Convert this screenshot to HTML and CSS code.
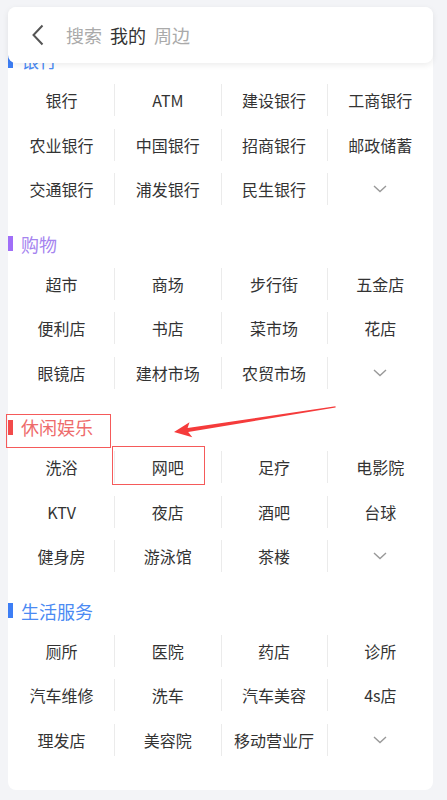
FILE: index.html
```html
<!DOCTYPE html>
<html>
<head>
  <meta charset="utf-8">
  <link rel="stylesheet" href="styles.css">
  <title>我的周边</title>
</head>
<body>
  <div class="search-bar">
    <svg class="back" width="14" height="22" viewBox="0 0 14 22"><polyline points="11.5,1.5 2.5,11 11.5,20.5" fill="none" stroke="#555" stroke-width="2"/></svg>
    <span class="tab">搜索</span>
    <span class="tab active">我的</span>
    <span class="tab">周边</span>
  </div>

  <div class="card">
    <div class="section">
      <div class="section-title blue">银行</div>
      <div class="grid">
        <div class="cell">银行</div>
        <div class="cell">ATM</div>
        <div class="cell">建设银行</div>
        <div class="cell">工商银行</div>
        <div class="cell">农业银行</div>
        <div class="cell">中国银行</div>
        <div class="cell">招商银行</div>
        <div class="cell">邮政储蓄</div>
        <div class="cell">交通银行</div>
        <div class="cell">浦发银行</div>
        <div class="cell">民生银行</div>
        <div class="cell"><svg class="more" width="14" height="8" viewBox="0 0 14 8"><polyline points="1,1 7,6.5 13,1" fill="none" stroke="#999" stroke-width="1.4"/></svg></div>
      </div>
    </div>

    <div class="section">
      <div class="section-title purple">购物</div>
      <div class="grid">
        <div class="cell">超市</div>
        <div class="cell">商场</div>
        <div class="cell">步行街</div>
        <div class="cell">五金店</div>
        <div class="cell">便利店</div>
        <div class="cell">书店</div>
        <div class="cell">菜市场</div>
        <div class="cell">花店</div>
        <div class="cell">眼镜店</div>
        <div class="cell">建材市场</div>
        <div class="cell">农贸市场</div>
        <div class="cell"><svg class="more" width="14" height="8" viewBox="0 0 14 8"><polyline points="1,1 7,6.5 13,1" fill="none" stroke="#999" stroke-width="1.4"/></svg></div>
      </div>
    </div>

    <div class="section">
      <div class="section-title red">休闲娱乐</div>
      <div class="grid">
        <div class="cell">洗浴</div>
        <div class="cell">网吧</div>
        <div class="cell">足疗</div>
        <div class="cell">电影院</div>
        <div class="cell">KTV</div>
        <div class="cell">夜店</div>
        <div class="cell">酒吧</div>
        <div class="cell">台球</div>
        <div class="cell">健身房</div>
        <div class="cell">游泳馆</div>
        <div class="cell">茶楼</div>
        <div class="cell"><svg class="more" width="14" height="8" viewBox="0 0 14 8"><polyline points="1,1 7,6.5 13,1" fill="none" stroke="#999" stroke-width="1.4"/></svg></div>
      </div>
    </div>

    <div class="section">
      <div class="section-title blue">生活服务</div>
      <div class="grid">
        <div class="cell">厕所</div>
        <div class="cell">医院</div>
        <div class="cell">药店</div>
        <div class="cell">诊所</div>
        <div class="cell">汽车维修</div>
        <div class="cell">洗车</div>
        <div class="cell">汽车美容</div>
        <div class="cell">4s店</div>
        <div class="cell">理发店</div>
        <div class="cell">美容院</div>
        <div class="cell">移动营业厅</div>
        <div class="cell"><svg class="more" width="14" height="8" viewBox="0 0 14 8"><polyline points="1,1 7,6.5 13,1" fill="none" stroke="#999" stroke-width="1.4"/></svg></div>
      </div>
    </div>
  </div>

  <!-- annotation overlay -->
  <div class="mark mark-title"></div>
  <div class="mark mark-cell"></div>
  <svg class="arrow" width="447" height="800" viewBox="0 0 447 800">
    <polygon points="174,432 189.5,422.3 187.6,427.9 335.5,406.3 335.6,407.6 188.2,431.9 192.3,437.2" fill="#f53b3b"/>
  </svg>
</body>
</html>
```

FILE: styles.css
```css
body {
  margin: 0;
  padding: 7px 14px 10px 8px;
  background: #f3f4f7;
  font-family: "Noto Sans CJK SC", "Liberation Sans", sans-serif;
  color: #333;
}

.search-bar {
  position: absolute;
  top: 7px;
  left: 8px;
  width: 425px;
  height: 56px;
  box-sizing: border-box;
  display: flex;
  align-items: center;
  padding-left: 23px;
  background: #fff;
  border-radius: 8px;
  box-shadow: 0 2px 6px rgba(0, 0, 0, 0.08);
  z-index: 2;
}
.back {
  margin-right: 21px;
}
.tab {
  font-size: 18px;
  color: #aaa;
  margin-right: 8px;
}
.tab.active {
  color: #333;
}

.card {
  background: #fff;
  border-radius: 8px;
  padding: 21px 0 28px;
}

.section-title {
  display: flex;
  align-items: center;
  height: 20px;
  padding: 22px 0 8px;
  font-size: 18px;
}
.section-title::before {
  content: "";
  width: 5px;
  height: 15px;
  margin-right: 8px;
}
.section-title.blue { color: #4b8af3; }
.section-title.blue::before { background: #3d7ef5; }
.section-title.purple { color: #a584ef; }
.section-title.purple::before { background: #a06ef8; }
.section-title.red { color: #ee6b6b; }
.section-title.red::before { background: #f24a4a; }

.grid {
  display: grid;
  grid-template-columns: repeat(4, 1fr);
}
.cell {
  height: 32px;
  margin: 6.25px 0;
  display: flex;
  align-items: center;
  justify-content: center;
  font-size: 16px;
  color: #333;
  border-left: 1px solid #ebebeb;
}
.cell:nth-child(4n+1) {
  border-left-color: transparent;
}

.mark {
  position: absolute;
  border: 1.5px solid #f55a5a;
  box-sizing: border-box;
}
.mark-title {
  left: 6px;
  top: 414px;
  width: 105px;
  height: 34px;
}
.mark-cell {
  left: 112px;
  top: 446px;
  width: 93px;
  height: 39px;
}
.arrow {
  position: absolute;
  left: 0;
  top: 0;
  pointer-events: none;
}
```
